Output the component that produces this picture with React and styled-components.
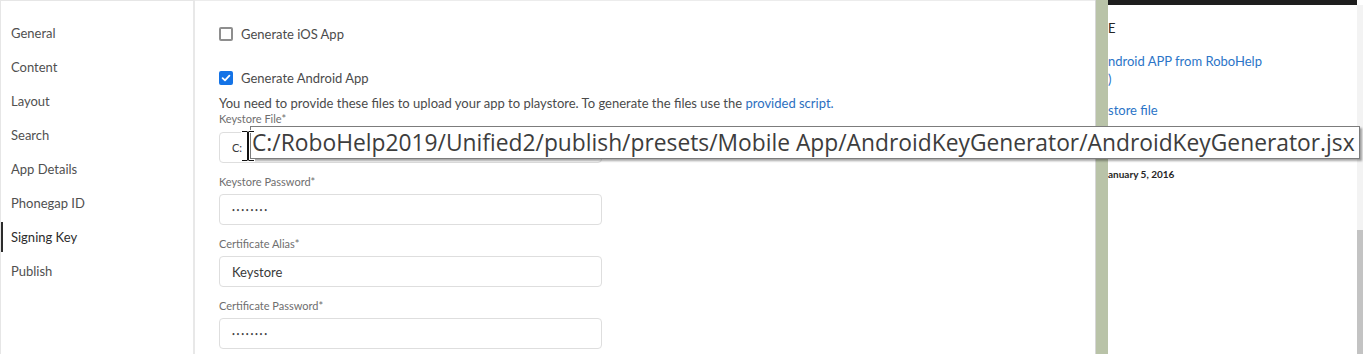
import React from "react"
import styled, { createGlobalStyle } from "styled-components"

const GlobalStyle = createGlobalStyle`
  html, body {
    margin: 0;
    padding: 0;
    background: #fff;
    overflow: hidden;
  }
  body {
    font-family: Lato, "Open Sans", sans-serif;
  }
`

const Screen = styled.div`
  position: relative;
  display: flex;
  width: 1363px;
  height: 354px;
  overflow: hidden;
  background: #fff;
`

const Sidebar = styled.nav`
  width: 192px;
  flex-shrink: 0;
  border-left: 1px solid #e6e6e6;
  border-top: 1px solid #e6e6e6;
  border-right: 2px solid #e8e8e8;
  padding-top: 15px;
  box-sizing: content-box;
`

const NavItem = styled.div`
  position: relative;
  height: 34px;
  line-height: 34px;
  padding-left: 10px;
  font-size: 13px;
  color: ${p => (p.$active ? "#2c2c2c" : "#505050")};

  &::before {
    content: "";
    display: ${p => (p.$active ? "block" : "none")};
    position: absolute;
    left: 0;
    top: 2px;
    width: 2px;
    height: 30px;
    background: #2c2c2c;
  }
`

const Main = styled.main`
  width: 876px;
  flex-shrink: 0;
  padding: 23px 0 0 24px;
  border-top: 1px solid #ececec;
  box-sizing: content-box;
`

const CheckRow = styled.label`
  display: flex;
  align-items: center;
  gap: 8px;
  height: 20px;
  margin-bottom: ${p => p.$gap || 0}px;
  font-size: 13px;
  color: #4b4b4b;
`

const Box = styled.span`
  display: flex;
  align-items: center;
  justify-content: center;
  width: 14px;
  height: 14px;
  box-sizing: border-box;
  border-radius: 2px;
  border: 2px solid ${p => (p.$checked ? "#1473e6" : "#8e8e8e")};
  background: ${p => (p.$checked ? "#1473e6" : "#fff")};
`

const Note = styled.p`
  margin: 7px 0 0;
  font-size: 13px;
  line-height: 16px;
  color: #4b4b4b;

  a {
    color: #2d6fc0;
    text-decoration: none;
  }
`

const Field = styled.div`
  width: 383px;
  margin-top: ${p => p.$top || 0}px;
  margin-bottom: 12px;
`

const Label = styled.div`
  font-size: 11px;
  line-height: 14px;
  color: #6e6e6e;
  margin-bottom: ${p => p.$gap || 5}px;
`

const Input = styled.div`
  height: 31px;
  box-sizing: border-box;
  border: 1px solid #dedede;
  border-radius: 4px;
  padding-left: 12px;
  display: flex;
  align-items: center;
  font-size: ${p => (p.$small ? 11 : 13)}px;
  color: #3a3a3a;
`

const Dots = styled.span`
  font-size: 5px;
  letter-spacing: 1.7px;
  color: #444;
`

const Divider = styled.div`
  width: 13px;
  flex-shrink: 0;
  background: #b9c3a8;
  border-left: 1px solid #d6d6d6;
  box-sizing: border-box;
`

const Browser = styled.section`
  flex: 1;
  display: flex;
  flex-direction: column;
`

const BrowserRow = styled.div`
  flex: 1;
  display: flex;
`

const Page = styled.div`
  flex: 1;
  display: flex;
  flex-direction: column;
  padding-top: 14px;
  overflow: hidden;
  white-space: nowrap;
`

const TopBar = styled.div`
  height: 5px;
  margin-right: 6px;
  background: #1e1e1e;
`

const Line = styled.div`
  font-size: ${p => p.$size || 13}px;
  font-weight: ${p => (p.$bold ? 700 : 400)};
  line-height: 18px;
  height: 18px;
  margin-bottom: ${p => p.$gap || 0}px;
  color: ${p => (p.$link ? "#2b74c7" : "#262626")};
`

const Scrollbar = styled.div`
  width: 6px;
  display: flex;
  flex-direction: column;
  background: #f3f3f3;
`

const Thumb = styled.div`
  margin-top: auto;
  height: 124px;
  background: #c3c3c3;
`

const Tooltip = styled.div`
  position: absolute;
  left: 250px;
  top: 126px;
  width: 1110px;
  height: 33px;
  box-sizing: border-box;
  border: 1px solid #7c7c7c;
  background: #fff;
  box-shadow: 2px 2px 2px rgba(0, 0, 0, 0.35);
  padding-left: 1px;
  font-family: "Open Sans", sans-serif;
  font-size: 22.8px;
  line-height: 31px;
  color: #3d3d3d;
  white-space: nowrap;
`

const Cursor = styled.svg`
  position: absolute;
  left: 240px;
  top: 129px;
`

const Check = () => (
  <svg width="10" height="10" viewBox="0 0 10 10">
    <path d="M1.6 5.2 L4 7.4 L8.4 2.6" fill="none" stroke="#fff" strokeWidth="1.8" strokeLinecap="round" strokeLinejoin="round" />
  </svg>
)

const IBeam = () => (
  <Cursor width="16" height="34" viewBox="0 0 16 34">
    <path d="M1 1 H7 L8 2 L9 1 H15 V4 H10 V30 H15 V33 H9 L8 32 L7 33 H1 V30 H6 V4 H1 Z" fill="#fff" />
    <path d="M2 2 H7 L8 3 L9 2 H14 V3 H9 V31 H14 V32 H9 L8 31 L7 32 H2 V31 H7 V3 H2 Z" fill="#111" />
  </Cursor>
)

const navItems = ["General", "Content", "Layout", "Search", "App Details", "Phonegap ID", "Signing Key", "Publish"]

const Password = () => <Dots>••••••••</Dots>

export default function App() {
  return (
    <>
      <GlobalStyle />
      <Screen>
        <Sidebar>
          {navItems.map(item => (
            <NavItem key={item} $active={item === "Signing Key"}>{item}</NavItem>
          ))}
        </Sidebar>

        <Main>
          <CheckRow $gap={24}>
            <Box />
            Generate iOS App
          </CheckRow>
          <CheckRow>
            <Box $checked><Check /></Box>
            Generate Android App
          </CheckRow>
          <Note>
            You need to provide these files to upload your app to playstore. To generate the files use the <a href="#">provided script.</a>
          </Note>

          <Field $top={1}>
            <Label $gap={6}>Keystore File*</Label>
            <Input $small>C:</Input>
          </Field>
          <Field>
            <Label>Keystore Password*</Label>
            <Input><Password /></Input>
          </Field>
          <Field>
            <Label>Certificate Alias*</Label>
            <Input>Keystore</Input>
          </Field>
          <Field>
            <Label>Certificate Password*</Label>
            <Input><Password /></Input>
          </Field>
        </Main>

        <Divider />

        <Browser>
          <TopBar />
          <BrowserRow>
            <Page>
              <Line $gap={15}>E</Line>
              <Line $link>ndroid APP from RoboHelp</Line>
              <Line $link $gap={13}>)</Line>
              <Line $link $gap={46}>store file</Line>
              <Line $bold $size={10}>anuary 5, 2016</Line>
            </Page>
            <Scrollbar><Thumb /></Scrollbar>
          </BrowserRow>
        </Browser>

        <Tooltip>C:/RoboHelp2019/Unified2/publish/presets/Mobile App/AndroidKeyGenerator/AndroidKeyGenerator.jsx</Tooltip>
        <IBeam />
      </Screen>
    </>
  )
}
